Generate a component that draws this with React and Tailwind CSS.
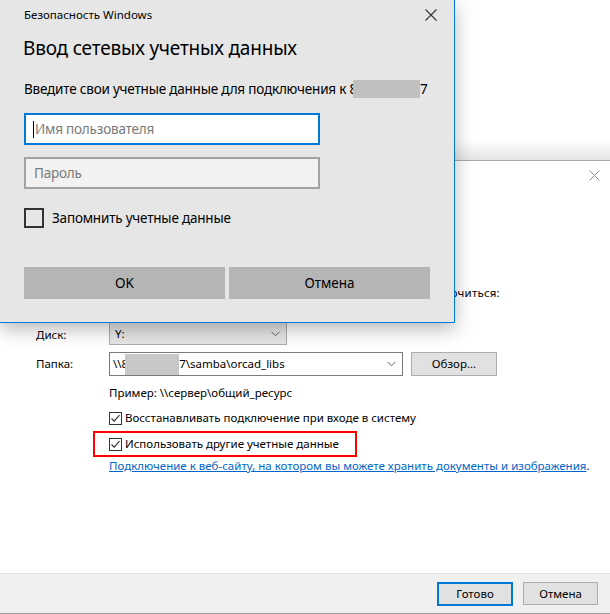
import React from "react";

const Chevron = () => (
  <svg width="9" height="6" viewBox="0 0 9 6" className="block">
    <path d="M0.5 0.8 L4.5 4.8 L8.5 0.8" fill="none" stroke="#666" strokeWidth="1" />
  </svg>
);

const Check = () => (
  <span className="w-[13px] h-[13px] border border-[#333] bg-white flex items-center justify-center shrink-0">
    <svg width="11" height="11" viewBox="0 0 11 11" className="block">
      <path d="M1.5 5.5 L4.2 8.2 L9.5 2.2" fill="none" stroke="#333" strokeWidth="1.2" />
    </svg>
  </span>
);

const CloseX = ({ size, color, w }) => (
  <svg width={size} height={size} viewBox={`0 0 ${size} ${size}`} className="block">
    <path d={`M0.5 0.5 L${size - 0.5} ${size - 0.5} M${size - 0.5} 0.5 L0.5 ${size - 0.5}`} stroke={color} strokeWidth={w} fill="none" />
  </svg>
);

export default function App() {
  const font = { fontFamily: '"Noto Sans", "Open Sans", sans-serif' };
  return (
    <div className="relative w-[610px] h-[614px] bg-white overflow-hidden flex flex-col text-black" style={font}>
      <div className="h-[160px] shrink-0 bg-gradient-to-b from-white from-[88%] to-[#e4e4e4]" />
      <div className="flex-1 flex flex-col border-t border-[#a8a8a8]">
        <div className="flex-1 flex flex-col">
          <div className="h-[28px] flex items-center justify-end pr-[10px]">
            <CloseX size={11} color="#8a8a8a" w={1} />
          </div>
          <div className="pl-[36px]">
            <div className="mt-[96px] text-[11.5px] leading-[16px] whitespace-nowrap tracking-[0.2px]">
              Укажите букву диска для подключения и папку, к которой нужно подключиться:
            </div>
            <div className="mt-[21px] grid grid-cols-[73px_auto] items-center text-[11.5px] leading-[16px]">
              <div className="pt-[3px]">Диск:</div>
              <div className="w-[178px] h-[23px] bg-[#e5e5e5] border border-[#adadad] flex items-center justify-between pl-[5px] pr-[6px]">
                <span>Y:</span>
                <Chevron />
              </div>
            </div>
            <div className="mt-[7px] grid grid-cols-[73px_auto] items-center text-[11.5px] leading-[16px]">
              <div>Папка:</div>
              <div className="flex items-center gap-[8px]">
                <div className="w-[294px] h-[24px] bg-white border border-[#7a7a7a] flex items-center justify-between pl-[3px] pr-[6px] whitespace-nowrap">
                  <span className="flex items-center">
                    <span>\\8</span>
                    <span className="inline-block w-[54px] h-[21px] bg-[#c8c8c8] -ml-[3px]" />
                    <span>7\samba\orcad_libs</span>
                  </span>
                  <Chevron />
                </div>
                <div className="w-[86px] h-[24px] bg-[#e1e1e1] border border-[#adadad] flex items-center justify-center">
                  Обзор...
                </div>
              </div>
            </div>
            <div className="pl-[73px] text-[11.5px] leading-[16px]">
              <div className="mt-[9px] whitespace-nowrap">Пример: \\сервер\общий_ресурс</div>
              <div className="mt-[9px] flex items-center gap-[3px] whitespace-nowrap">
                <Check />
                <span>Восстанавливать подключение при входе в систему</span>
              </div>
              <div className="mt-[5px] -ml-[16px] w-[264px] h-[26px] border-2 border-[#ff0000] pl-[14px] flex items-center gap-[3px] whitespace-nowrap">
                <Check />
                <span>Использовать другие учетные данные</span>
              </div>
              <div className="mt-[1px] whitespace-nowrap">
                <span className="text-[#0066cc] underline">Подключение к веб-сайту, на котором вы можете хранить документы и изображения</span>
                <span>.</span>
              </div>
            </div>
          </div>
        </div>
        <div className="h-[41px] shrink-0 bg-[#f0f0f0] border-t border-[#dfdfdf] border-b border-b-[#a0a0a0] flex items-center justify-end gap-[10px] pr-[12px] text-[11.5px]">
          <div className="w-[76px] h-[24px] bg-[#e1e1e1] border-2 border-[#0078d7] flex items-center justify-center">Готово</div>
          <div className="w-[75px] h-[23px] bg-[#e1e1e1] border border-[#adadad] flex items-center justify-center">Отмена</div>
        </div>
      </div>

      <div className="absolute left-0 top-0 w-[455px] h-[323px] bg-[#e6e6e6] border-r border-b border-[#0078d7] shadow-[0_6px_18px_rgba(0,0,0,0.28)]">
        <div className="flex items-center justify-between pl-[24px] pr-[17px] pt-[6px] h-[24px]">
          <span className="text-[11.5px] leading-[16px]">Безопасность Windows</span>
          <CloseX size={12} color="#333" w={1.1} />
        </div>
        <div className="pl-[23px] mt-[11px] text-[19px] leading-[26px] tracking-[-0.2px]">Ввод сетевых учетных данных</div>
        <div className="pl-[24px] mt-[18px] text-[13.5px] leading-[20px] tracking-[-0.2px] flex items-center whitespace-nowrap">
          <span>Введите свои учетные данные для подключения к 8</span>
          <span className="inline-block w-[67px] h-[18px] bg-[#c0c0c0] -ml-[4px]" />
          <span>7</span>
        </div>
        <div className="pl-[24px] mt-[14px] flex flex-col gap-[12px]">
          <div className="w-[296px] h-[32px] bg-white border-2 border-[#0078d7] flex items-center pl-[7px] text-[13.5px] tracking-[-0.2px]">
            <span className="w-px h-[17px] bg-black mr-px" />
            <span className="text-[#7a7a7a]">Имя пользователя</span>
          </div>
          <div className="w-[296px] h-[32px] bg-[#f2f2f2] border-2 border-[#a3a3a3] flex items-center pl-[8px] text-[13.5px] tracking-[-0.2px] text-[#7a7a7a]">
            Пароль
          </div>
        </div>
        <div className="pl-[24px] mt-[19px] flex items-center gap-[8px] text-[13.5px] tracking-[-0.2px]">
          <span className="w-[20px] h-[20px] border-2 border-[#333]" />
          <span>Запомнить учетные данные</span>
        </div>
        <div className="pl-[24px] mt-[39px] flex gap-[4px] text-[13.5px]">
          <div className="w-[201px] h-[32px] bg-[#b5b5b5] flex items-center justify-center">OK</div>
          <div className="w-[201px] h-[32px] bg-[#b5b5b5] flex items-center justify-center">Отмена</div>
        </div>
      </div>
    </div>
  );
}
